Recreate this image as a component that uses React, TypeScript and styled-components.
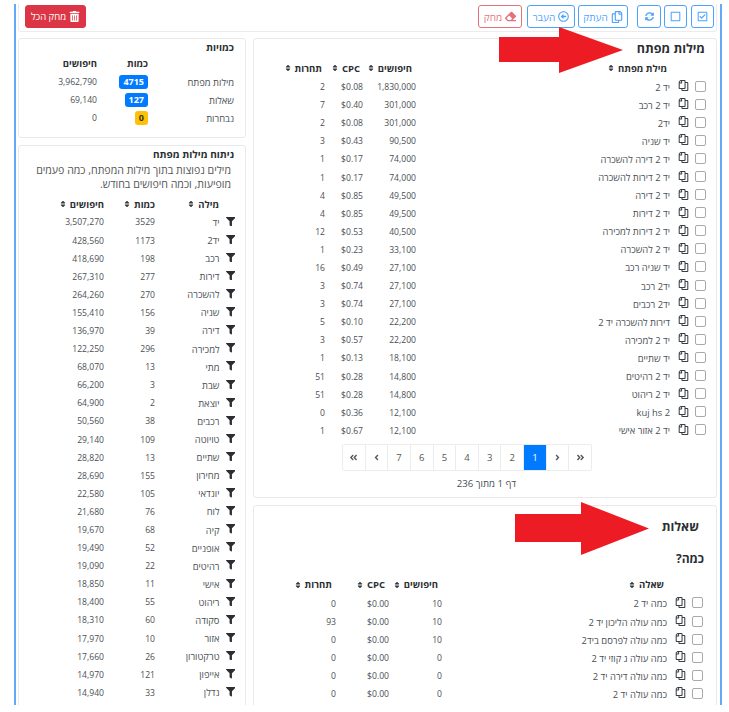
import React from "react";
import styled, { createGlobalStyle } from "styled-components";
import {
  FaRegCheckSquare,
  FaRegSquare,
  FaSyncAlt,
  FaRegCopy,
  FaRegArrowAltCircleLeft,
  FaEraser,
  FaTrashAlt,
  FaFilter,
  FaSort,
  FaAngleLeft,
  FaAngleRight,
  FaAngleDoubleLeft,
  FaAngleDoubleRight,
} from "react-icons/fa";

const Global = createGlobalStyle`
  html, body { margin: 0; padding: 0; background: #fff; }
  body { font-family: "Open Sans", "Noto Sans", "DejaVu Sans", sans-serif; font-size: 9px; color: #4a4f55; }
  * { box-sizing: border-box; }
`;

const Frame = styled.div`
  direction: rtl;
  position: relative;
  width: 708px;
  height: 701px;
  margin: 4px 0 0 14px;
  padding: 0 3px 0 2px;
  border-left: 2px solid #62aaf7;
  border-right: 2px solid #62aaf7;
  overflow: hidden;
`;

const Toolbar = styled.div`
  display: flex;
  justify-content: space-between;
  align-items: flex-start;
  height: 28px;
  padding: 1px 2px 0 6px;
  border: 1px solid #ececec;
  border-top: 0;
  border-radius: 0 0 3px 3px;
`;

const ToolGroup = styled.div`
  display: flex;
`;

const ToolButton = styled.button<{ $w: number; $after?: number; $tone?: "blue" | "red" }>`
  display: inline-flex;
  align-items: center;
  justify-content: center;
  gap: 3px;
  width: ${(p) => p.$w}px;
  height: 23px;
  margin: 0 0 0 ${(p) => p.$after ?? 3}px;
  padding: 0;
  font: inherit;
  font-size: 10px;
  background: #fff;
  border-radius: 3px;
  opacity: 0.7;
  color: ${(p) => (p.$tone === "red" ? "#dc3545" : "#007bff")};
  border: 1px solid ${(p) => (p.$tone === "red" ? "#dc3545" : "#007bff")};
`;

const ClearAll = styled.button`
  display: inline-flex;
  align-items: center;
  justify-content: center;
  gap: 3px;
  width: 61px;
  height: 23px;
  padding: 0;
  font: inherit;
  font-size: 9.5px;
  color: #fff;
  background: #dc3545;
  border: 1px solid #dc3545;
  border-radius: 3px;
`;

const Columns = styled.div`
  display: grid;
  grid-template-columns: 464px 228px;
  column-gap: 7px;
  margin-top: 6px;
  align-items: start;
`;

const Stack = styled.div`
  display: flex;
  flex-direction: column;
  gap: 7px;
`;

const Card = styled.section<{ $pr?: number; $pb?: number }>`
  position: relative;
  padding: 0 ${(p) => p.$pr ?? 11}px ${(p) => p.$pb ?? 0}px 0;
  border: 1px solid #e9e9e9;
  border-radius: 3px;
  background: #fff;
`;

const MainTitle = styled.h3<{ $top: number; $pr: number; $h: number }>`
  margin: ${(p) => p.$top}px ${(p) => p.$pr}px 0 0;
  height: ${(p) => p.$h}px;
  line-height: ${(p) => p.$h}px;
  font-size: 12.5px;
  font-weight: 700;
  color: #2b2f33;
`;

const SubTitle = styled.h4`
  margin: 16px -1px 8px 0;
  height: 16px;
  line-height: 16px;
  font-size: 12px;
  font-weight: 700;
  color: #2b2f33;
`;

const SideTitle = styled.h5`
  margin: 0;
  padding-top: 1px;
  height: 15px;
  line-height: 14px;
  font-size: 10px;
  font-weight: 700;
  color: #2b2f33;
`;

const Row = styled.div<{ $cols: string; $h?: number }>`
  display: grid;
  grid-template-columns: ${(p) => p.$cols};
  align-items: center;
  height: ${(p) => p.$h ?? 18.1}px;
  font-size: 9.4px;
  white-space: nowrap;
`;

const Head = styled.span<{ $pr?: number }>`
  display: inline-flex;
  align-items: center;
  gap: 3px;
  padding-right: ${(p) => p.$pr ?? 3}px;
  font-weight: 700;
  font-size: 9.5px;
  color: #2b2f33;
`;

const SortIcon = styled(FaSort)`
  font-size: 8px;
  color: #33383d;
`;

const Cell = styled.span``;

const NumCell = styled.span`
  font-size: 8.6px;
`;

const NameCell = styled.span`
  display: flex;
  align-items: center;
`;

const Check = styled.span`
  flex: none;
  width: 11px;
  height: 11px;
  margin: -2px 0 0 6px;
  border: 1px solid #a9a9a9;
  border-radius: 2px;
`;

const CopyIcon = styled(FaRegCopy)`
  flex: none;
  font-size: 11px;
  margin: -3px 0 0 8px;
  color: #3a3f44;
  transform: scaleX(-1);
`;

const FilterIcon = styled(FaFilter)`
  flex: none;
  font-size: 9.5px;
  margin: -2px -1px 0 6px;
  color: #2b2f33;
`;

const Pager = styled.div`
  display: flex;
  width: 250px;
  height: 27px;
  margin: 4px 114px 0 0;
  border: 1px solid #ececec;
  border-radius: 2px;
`;

const PageItem = styled.span<{ $active?: boolean }>`
  flex: 1;
  display: flex;
  align-items: center;
  justify-content: center;
  font-size: 9.5px;
  color: ${(p) => (p.$active ? "#fff" : "#555")};
  background: ${(p) => (p.$active ? "#007bff" : "#fff")};
  border-left: 1px solid #ececec;
  &:last-child { border-left: 0; }
`;

const PagerInfo = styled.div`
  height: 14px;
  margin: 6px 0 6px;
  padding-left: 13px;
  line-height: 14px;
  text-align: center;
  font-size: 9.6px;
`;

const Badge = styled.span<{ $warn?: boolean }>`
  display: inline-block;
  height: 14px;
  padding: 0 4px;
  line-height: 14px;
  font-size: 9px;
  font-weight: 700;
  border-radius: 3px;
  color: ${(p) => (p.$warn ? "#3a3200" : "#fff")};
  background: ${(p) => (p.$warn ? "#ffc107" : "#007bff")};
`;

const Blurb = styled.p`
  margin: 2px 3px 4px 0;
  line-height: 14px;
  font-size: 10.6px;
  color: #555;
`;

const CountsBody = styled.div`
  padding-bottom: 10px;
`;

const Arrow = styled.svg<{ $left: number; $top: number }>`
  position: absolute;
  left: ${(p) => p.$left}px;
  top: ${(p) => p.$top}px;
`;

const keywords: [string, string, string, string][] = [
  ["יד 2", "1,830,000", "$0.08", "2"],
  ["יד 2 רכב", "301,000", "$0.40", "7"],
  ["יד2", "301,000", "$0.08", "2"],
  ["יד שניה", "90,500", "$0.43", "3"],
  ["יד 2 דירה להשכרה", "74,000", "$0.17", "1"],
  ["יד 2 דירות להשכרה", "74,000", "$0.17", "1"],
  ["יד 2 דירה", "49,500", "$0.85", "4"],
  ["יד 2 דירות", "49,500", "$0.85", "4"],
  ["יד 2 דירות למכירה", "40,500", "$0.53", "12"],
  ["יד 2 להשכרה", "33,100", "$0.23", "1"],
  ["יד שניה רכב", "27,100", "$0.49", "16"],
  ["יד2 רכב", "27,100", "$0.74", "3"],
  ["יד2 רכבים", "27,100", "$0.74", "3"],
  ["דירות להשכרה יד 2", "22,200", "$0.10", "5"],
  ["יד 2 למכירה", "22,200", "$0.57", "3"],
  ["יד שתיים", "18,100", "$0.13", "1"],
  ["יד 2 רהיטים", "14,800", "$0.28", "51"],
  ["יד 2 ריהוט", "14,800", "$0.28", "51"],
  ["kuj hs 2", "12,100", "$0.36", "0"],
  ["יד 2 אזור אישי", "12,100", "$0.67", "1"],
];

const questions: [string, string, string, string][] = [
  ["כמה יד 2", "10", "$0.00", "0"],
  ["כמה עולה הליכון יד 2", "10", "$0.00", "93"],
  ["כמה עולה לפרסם ביד2", "10", "$0.00", "0"],
  ["כמה עולה ג קוזי יד 2", "0", "$0.00", "0"],
  ["כמה עולה דירה יד 2", "0", "$0.00", "0"],
  ["כמה עולה יד 2", "0", "$0.00", "0"],
];

const words: [string, string, string][] = [
  ["יד", "3529", "3,507,270"],
  ["יד2", "1173", "428,560"],
  ["רכב", "198", "418,690"],
  ["דירות", "277", "267,310"],
  ["להשכרה", "270", "264,260"],
  ["שניה", "156", "155,410"],
  ["דירה", "39", "136,970"],
  ["למכירה", "296", "122,250"],
  ["מתי", "13", "68,070"],
  ["שבת", "3", "66,200"],
  ["יוצאת", "2", "64,900"],
  ["רכבים", "38", "50,560"],
  ["טויוטה", "109", "29,140"],
  ["שתיים", "13", "28,820"],
  ["מחירון", "155", "28,690"],
  ["יונדאי", "105", "22,580"],
  ["לוח", "76", "21,680"],
  ["קיה", "68", "19,670"],
  ["אופניים", "52", "19,490"],
  ["רהיטים", "22", "19,090"],
  ["אישי", "11", "18,850"],
  ["ריהוט", "55", "18,400"],
  ["סקודה", "60", "18,310"],
  ["אזור", "10", "17,970"],
  ["טרקטורון", "26", "17,660"],
  ["אייפון", "121", "14,970"],
  ["נדלן", "33", "14,940"],
];

const KW_COLS = "290px 53px 38px 1fr";
const Q_COLS = "261px 53px 53px 1fr";
const WORD_COLS = "79px 51px 1fr";
const COUNT_COLS = "86px 51px 1fr";

const SortHead = ({ label, pr }: { label: string; pr?: number }) => (
  <Cell>
    <Head $pr={pr}>
      {label}
      <SortIcon />
    </Head>
  </Cell>
);

const PhraseRow = ({ cols, data }: { cols: string; data: [string, string, string, string] }) => (
  <Row $cols={cols}>
    <NameCell>
      <Check />
      <CopyIcon />
      {data[0]}
    </NameCell>
    <NumCell>{data[1]}</NumCell>
    <NumCell>{data[2]}</NumCell>
    <NumCell>{data[3]}</NumCell>
  </Row>
);

const ArrowShape = ({ left, top, w, h, shaftW, sTop, sBottom }: { left: number; top: number; w: number; h: number; shaftW: number; sTop: number; sBottom: number }) => (
  <Arrow $left={left} $top={top} width={w} height={h} viewBox={`0 0 ${w} ${h}`}>
    <path
      d={`M0 ${sTop} H${shaftW} V0 L${w} ${h / 2} L${shaftW} ${h} V${sBottom} H0 Z`}
      fill="#ed1c24"
    />
  </Arrow>
);

export default function App() {
  return (
    <>
      <Global />
      <Frame>
        <Toolbar>
          <ToolGroup>
            <ToolButton $w={23} $after={4}><FaRegCheckSquare size={11} /></ToolButton>
            <ToolButton $w={23} $after={3}><FaRegSquare size={11} /></ToolButton>
            <ToolButton $w={24} $after={9}><FaSyncAlt size={9} /></ToolButton>
            <ToolButton $w={50} $after={3}><FaRegCopy size={12} />העתק</ToolButton>
            <ToolButton $w={48} $after={5}><FaRegArrowAltCircleLeft size={11} />העבר</ToolButton>
            <ToolButton $w={44} $after={0} $tone="red"><FaEraser size={11} />מחק</ToolButton>
          </ToolGroup>
          <ClearAll><FaTrashAlt size={11} />מחק הכל</ClearAll>
        </Toolbar>
        <Columns>
          <Stack>
            <Card $pr={10}>
              <MainTitle $top={1} $pr={1} $h={18}>מילות מפתח</MainTitle>
              <Row $cols={KW_COLS} $h={20}>
                <SortHead label="מילת מפתח" pr={39} />
                <SortHead label="חיפושים" pr={4} />
                <SortHead label="CPC" />
                <SortHead label="תחרות" />
              </Row>
              {keywords.map((k, i) => (
                <PhraseRow key={i} cols={KW_COLS} data={k} />
              ))}
              <Pager>
                <PageItem><FaAngleDoubleRight size={9} /></PageItem>
                <PageItem><FaAngleRight size={9} /></PageItem>
                <PageItem $active>1</PageItem>
                <PageItem>2</PageItem>
                <PageItem>3</PageItem>
                <PageItem>4</PageItem>
                <PageItem>5</PageItem>
                <PageItem>6</PageItem>
                <PageItem>7</PageItem>
                <PageItem><FaAngleLeft size={9} /></PageItem>
                <PageItem><FaAngleDoubleLeft size={9} /></PageItem>
              </Pager>
              <PagerInfo>דף 1 מתוך 236</PagerInfo>
              <ArrowShape left={245} top={-12} w={124} h={46} shaftW={60} sTop={10} sBottom={35} />
            </Card>
            <Card $pr={13} $pb={20}>
              <MainTitle $top={13} $pr={4} $h={16}>שאלות</MainTitle>
              <SubTitle>כמה?</SubTitle>
              <Row $cols={Q_COLS} $h={20}>
                <SortHead label="שאלה" pr={39} />
                <SortHead label="חיפושים" pr={4} />
                <SortHead label="CPC" pr={4} />
                <SortHead label="תחרות" pr={4} />
              </Row>
              {questions.map((q, i) => (
                <PhraseRow key={i} cols={Q_COLS} data={q} />
              ))}
              <ArrowShape left={261} top={-4} w={134} h={53} shaftW={66} sTop={12} sBottom={40} />
            </Card>
          </Stack>
          <Stack>
            <Card>
              <SideTitle>כמויות</SideTitle>
              <CountsBody>
                <Row $cols={COUNT_COLS} $h={19}>
                  <Cell />
                  <Cell><Head $pr={0}>כמות</Head></Cell>
                  <Cell><Head $pr={0}>חיפושים</Head></Cell>
                </Row>
                <Row $cols={COUNT_COLS}>
                  <Cell>מילות מפתח</Cell>
                  <Cell><Badge>4715</Badge></Cell>
                  <NumCell>3,962,790</NumCell>
                </Row>
                <Row $cols={COUNT_COLS}>
                  <Cell>שאלות</Cell>
                  <Cell><Badge>127</Badge></Cell>
                  <NumCell>69,140</NumCell>
                </Row>
                <Row $cols={COUNT_COLS}>
                  <Cell>נבחרות</Cell>
                  <Cell><Badge $warn>0</Badge></Cell>
                  <NumCell>0</NumCell>
                </Row>
              </CountsBody>
            </Card>
            <Card $pb={20}>
              <SideTitle>ניתוח מילות מפתח</SideTitle>
              <Blurb>מילים נפוצות בתוך מילות המפתח, כמה פעמים מופיעות, וכמה חיפושים בחודש.</Blurb>
              <Row $cols={WORD_COLS}>
                <SortHead label="מילה" pr={15} />
                <SortHead label="כמות" pr={0} />
                <SortHead label="חיפושים" pr={0} />
              </Row>
              {words.map((w, i) => (
                <Row key={i} $cols={WORD_COLS}>
                  <NameCell>
                    <FilterIcon />
                    {w[0]}
                  </NameCell>
                  <NumCell>{w[1]}</NumCell>
                  <NumCell>{w[2]}</NumCell>
                </Row>
              ))}
            </Card>
          </Stack>
        </Columns>
      </Frame>
    </>
  );
}
